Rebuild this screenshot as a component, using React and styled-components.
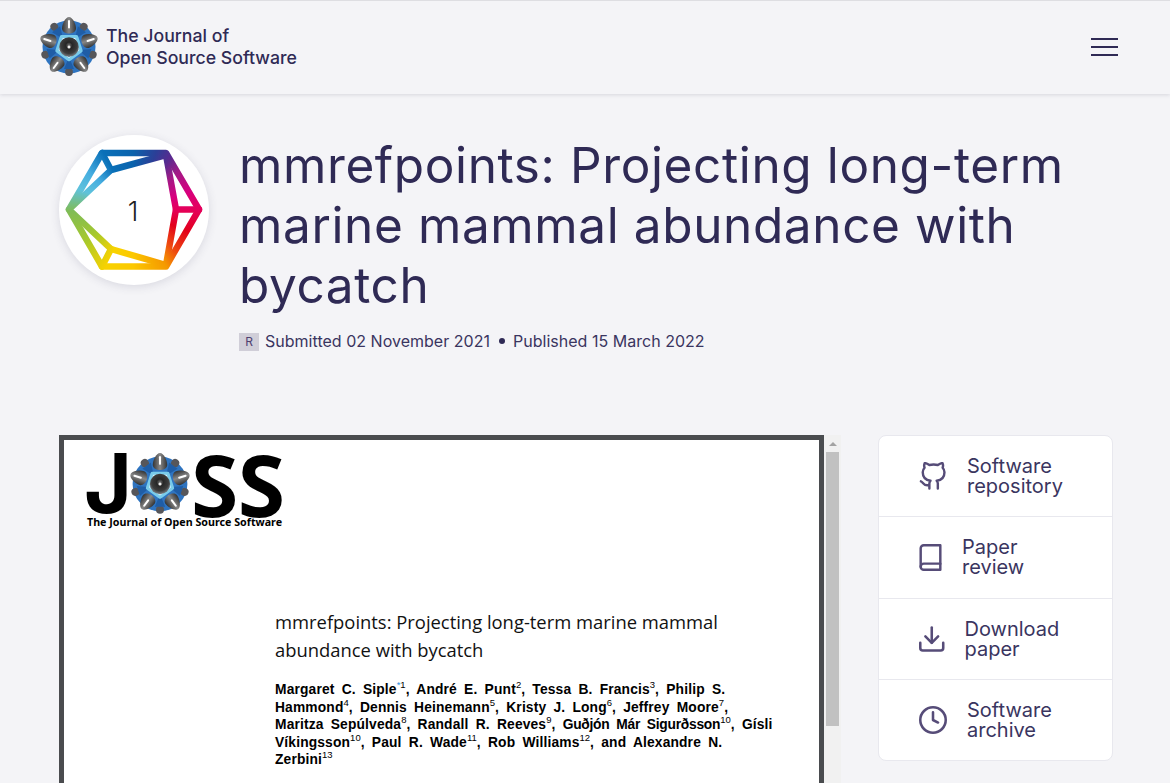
import React from "react";
import styled, { createGlobalStyle } from "styled-components";

const Global = createGlobalStyle`
  html, body { margin: 0; padding: 0; height: 100%; overflow: hidden; background: #f4f4f7; }
  body { font-family: Inter, "Liberation Sans", sans-serif; color: #2f2a55; }
  * { box-sizing: border-box; }
`;

const Header = styled.header`
  height: 94px; padding: 0 52px 1px 39px;
  display: flex; align-items: center; justify-content: space-between;
  border-top: 1px solid #dedee2;
  box-shadow: 0 1px 4px rgba(60, 60, 90, 0.16);
`;
const Brand = styled.a`display: flex; align-items: center; gap: 7px;`;
const BrandName = styled.div`font-size: 17.7px; font-weight: 500; line-height: 22px; color: #2f2a55; padding-bottom: 1px;`;
const Burger = styled.button`
  width: 27px; height: 18px; padding: 0; border: 0; background: none;
  display: flex; flex-direction: column; justify-content: space-between;
`;
const BurgerLine = styled.span`display: block; height: 2px; background: #2f2a55;`;

const Main = styled.main`padding: 41px 57px 0 59px;`;
const Hero = styled.section`display: flex; align-items: flex-start; gap: 30px; height: 300px;`;
const Badge = styled.div`
  width: 150px; height: 150px; flex: none; border-radius: 50%; background: #fff;
  box-shadow: 0 2px 10px rgba(60, 60, 90, 0.14);
  position: relative; display: flex; align-items: center; justify-content: center;
`;
const BadgeNumber = styled.span`
  font-size: 27px; color: #222; position: relative; top: 1px; left: -1px; font-weight: 300;
`;
const BadgeArt = styled.svg`position: absolute; inset: 0;`;
const Rainbow = styled.div`
  width: 150px; height: 150px;
  background: conic-gradient(from 0deg at 49.5% 49.5%,
    #0a62ac 0deg, #2b3f97 22deg, #5a2a8f 36deg, #a11a86 50deg, #d6007f 72deg,
    #e5005b 90deg, #e2001a 112deg, #ee4a10 135deg, #f59a00 150deg, #fcc800 180deg,
    #f8d200 205deg, #a9c92a 235deg, #80bc55 268deg, #5fc2dc 290deg, #45ade0 310deg,
    #0a70b8 332deg, #0a62ac 360deg);
`;
const HeroText = styled.div`flex: 1; min-width: 0;`;
const Title = styled.h1`
  margin: 0; font-size: 49.5px; line-height: 60px; font-weight: 400; color: #2f2a55; letter-spacing: 0.62px;
`;
const Meta = styled.div`
  margin-top: 15px; display: flex; align-items: center; gap: 6px;
  font-size: 16px; line-height: 20px; color: #3a3560; letter-spacing: 0.02px;
`;
const Avatar = styled.span`
  width: 20px; height: 18px; background: #d0ced8; color: #4f3f70;
  font-size: 12px; display: flex; align-items: center; justify-content: center; margin-top: 3px;
`;
const Dot = styled.span`
  width: 6px; height: 6px; border-radius: 50%; background: #2f2a55; margin: 0 2px 0 3px;
`;

const Columns = styled.section`display: grid; grid-template-columns: 782px 235px; column-gap: 37px;`;
const Viewer = styled.div`display: flex; height: 400px; overflow: hidden;`;
const Paper = styled.article`
  flex: 1; border: 5px solid #4a4c4f; background: #fff; color: #000; overflow: hidden;
  padding: 12px 0 0 23px;
`;
const Scrollbar = styled.div`
  width: 17px; flex: none; background: #f1f1f1; display: flex; flex-direction: column; align-items: center;
`;
const ScrollArrow = styled.span`
  width: 0; height: 0; margin: 7px 0 6px;
  border-left: 4px solid transparent; border-right: 4px solid transparent; border-bottom: 4px solid #a3a3a3;
`;
const ScrollThumb = styled.span`width: 13px; height: 274px; background: #c1c1c1;`;

const Masthead = styled.div`display: flex; align-items: center; height: 64px; line-height: 1; color: #000;`;
const MastLetter = styled.span`font-family: "Noto Sans", sans-serif; font-size: 86px; font-weight: 700; letter-spacing: -0.5px;`;
const MastJ = styled.span`font-family: Inter, sans-serif; font-size: 82px; font-weight: 700; margin: 0 -3px 0 -3px;`;
const Tagline = styled.div`
  font-family: "Noto Sans", sans-serif; font-size: 10.7px; font-weight: 700; line-height: 13px;
`;
const PaperBody = styled.div`margin-left: 188px; margin-top: 79px;`;
const PaperTitle = styled.h2`
  margin: 0; font-family: "Open Sans", sans-serif; font-weight: 400; font-size: 18.4px; line-height: 28px; color: #111;
  white-space: nowrap;
`;
const Authors = styled.p`
  margin: 17px 0 0; font-family: "Liberation Sans", sans-serif; font-weight: 700; font-size: 13.8px; line-height: 17.6px;
  white-space: nowrap; word-spacing: 3.2px; letter-spacing: 0.15px;
  sup { font-weight: 400; font-size: 9.5px; line-height: 0; letter-spacing: 0; }
  .star { color: #2d8fe0; }
`;
const TightName = styled.span`letter-spacing: -0.25px;`;

const Links = styled.nav`
  height: 326px; background: #fff; border: 1px solid #e8e8ee; border-radius: 8px;
  display: flex; flex-direction: column;
`;
const LinkRow = styled.a`
  flex: 1; display: flex; align-items: center; gap: 20px; padding-left: 40px;
  & + & { border-top: 1px solid #e8e8ee; }
`;
const LinkText = styled.span`font-size: 20px; line-height: 20px; color: #3a3560;`;
const LinkIcon = styled.svg`
  flex: none; fill: none; stroke: #564c78; stroke-width: 2; stroke-linecap: round; stroke-linejoin: round;
`;

const range = [0, 1, 2, 3, 4];
function Logo({ size }) {
  return (
    <svg width={size} height={size} viewBox="0 0 60 60" style={{ flex: "none" }}>
      <defs>
        <radialGradient id="coreGrad" cx="50%" cy="42%" r="55%">
          <stop offset="0" stopColor="#777" />
          <stop offset="0.3" stopColor="#262626" />
          <stop offset="0.75" stopColor="#3c3c3c" />
          <stop offset="1" stopColor="#6f7478" />
        </radialGradient>
        <linearGradient id="petalGrad" x1="0" x2="1" y1="0" y2="0">
          <stop offset="0" stopColor="#333" />
          <stop offset="0.5" stopColor="#888" />
          <stop offset="1" stopColor="#333" />
        </linearGradient>
      </defs>
      <circle cx="30" cy="30" r="26.5" fill="#2f74c0" />
      {range.map((i) => (
        <g key={i} transform={`rotate(${i * 72 + 36} 30 30)`}>
          <circle cx="30" cy="5" r="3.9" fill="#56565a" />
          <path d="M25 8 L30 20 L35 8 Z" fill="#1f5da6" />
        </g>
      ))}
      {range.map((i) => (
        <g key={i} transform={`rotate(${i * 72} 30 30)`}>
          <path d="M30 0 C33.5 0 37 7 37 11.5 C37 14.5 33.5 16.5 30 16.5 C26.5 16.5 23 14.5 23 11.5 C23 7 26.5 0 30 0 Z" fill="url(#petalGrad)" />
          <path d="M30 4 L30 10.5" stroke="#fff" strokeWidth="2" strokeLinecap="round" />
        </g>
      ))}
      <path d="M30 42.5 L18.1 33.9 L22.6 19.9 L37.4 19.9 L41.9 33.9 Z" fill="#3b8fd6" stroke="#79cbea" strokeWidth="3.6" strokeLinejoin="round" />
      <path d="M30 40.6 L20 33.2 L23.8 21.5 L36.2 21.5 L40 33.2 Z" fill="none" stroke="#d9f3fb" strokeWidth="1" strokeLinejoin="round" />
      <circle cx="30" cy="30" r="9.8" fill="url(#coreGrad)" />
      <circle cx="30" cy="30" r="1.5" fill="#eee" />
    </svg>
  );
}

const hexPath = "M43 18 H107 L140 74.5 L107 131.5 H43 L10 74.5 Z";
const innerPath = "M10 74.5 L52 35 L107 20 L117 74.5 L107 130 L52 114 Z";

function ColorBadge() {
  return (
    <BadgeArt width="150" height="150" viewBox="0 0 150 150">
      <mask id="rainbowMask">
        <g fill="none" stroke="#fff" strokeWidth="6.5" strokeLinejoin="round" strokeLinecap="round">
          <path d={hexPath} />
          <path d={innerPath} />
          <path d="M43 18 L52 35 M117 74.5 H140 M52 114 L43 131.5" />
        </g>
      </mask>
      <foreignObject x="0" y="0" width="150" height="150" mask="url(#rainbowMask)">
        <Rainbow />
      </foreignObject>
    </BadgeArt>
  );
}

const iconGithub = (
  <path d="M9 19c-5 1.5-5-2.5-7-3m14 6v-3.87a3.37 3.37 0 0 0-.94-2.61c3.14-.35 6.44-1.54 6.44-7A5.44 5.44 0 0 0 20 4.77 5.07 5.07 0 0 0 19.91 1S18.73.65 16 2.48a13.38 13.38 0 0 0-7 0C6.27.65 5.09 1 5.09 1A5.07 5.07 0 0 0 5 4.77a5.44 5.44 0 0 0-1.5 3.75c0 5.42 3.3 6.61 6.44 7A3.37 3.37 0 0 0 9 18.13V22" />
);
const iconBook = (
  <>
    <path d="M4 19.5A2.5 2.5 0 0 1 6.5 17H20" />
    <path d="M6.5 2H20v20H6.5A2.5 2.5 0 0 1 4 19.5v-15A2.5 2.5 0 0 1 6.5 2z" />
  </>
);
const iconDownload = (
  <>
    <path d="M21 15v4a2 2 0 0 1-2 2H5a2 2 0 0 1-2-2v-4" />
    <polyline points="7 10 12 15 17 10" />
    <line x1="12" y1="15" x2="12" y2="3" />
  </>
);
const iconClock = (
  <>
    <circle cx="12" cy="12" r="10" />
    <polyline points="12 6 12 12 16 14" />
  </>
);

const links = [
  { a: "Software", b: "repository", w: 28, h: 28, vb: "0.4 0 23.2 23.2", icon: iconGithub },
  { a: "Paper", b: "review", w: 23, h: 27, vb: "3 1 18 22", icon: iconBook },
  { a: "Download", b: "paper", w: 25.5, h: 26, vb: "2 2 20 20", icon: iconDownload },
  { a: "Software", b: "archive", w: 28, h: 28, vb: "1 1 22 22", icon: iconClock },
];

export default function App() {
  return (
    <>
      <Global />
      <Header>
        <Brand>
          <Logo size={60} />
          <BrandName>The Journal of<br />Open Source Software</BrandName>
        </Brand>
        <Burger aria-label="Menu">
          <BurgerLine /><BurgerLine /><BurgerLine />
        </Burger>
      </Header>
      <Main>
        <Hero>
          <Badge>
            <ColorBadge />
            <BadgeNumber>1</BadgeNumber>
          </Badge>
          <HeroText>
            <Title>mmrefpoints: Projecting long-term marine mammal abundance with bycatch</Title>
            <Meta>
              <Avatar>R</Avatar>
              <span>Submitted 02 November 2021</span>
              <Dot />
              <span>Published 15 March 2022</span>
            </Meta>
          </HeroText>
        </Hero>
        <Columns>
          <Viewer>
            <Paper>
              <Masthead>
                <MastJ>J</MastJ>
                <Logo size={62} />
                <MastLetter>SS</MastLetter>
              </Masthead>
              <Tagline>The Journal of Open Source Software</Tagline>
              <PaperBody>
                <PaperTitle>mmrefpoints: Projecting long-term marine mammal<br />abundance with bycatch</PaperTitle>
                <Authors>
                  Margaret C. Siple<sup className="star">*</sup><sup>1</sup>, André E. Punt<sup>2</sup>, Tessa B. Francis<sup>3</sup>, Philip S.<br />
                  Hammond<sup>4</sup>, Dennis Heinemann<sup>5</sup>, Kristy J. Long<sup>6</sup>, Jeffrey Moore<sup>7</sup>,<br />
                  Maritza Sepúlveda<sup>8</sup>, Randall R. Reeves<sup>9</sup>, <TightName>Guðjón Már Sigurðsson</TightName><sup>10</sup>, Gísli<br />
                  Víkingsson<sup>10</sup>, Paul R. Wade<sup>11</sup>, Rob Williams<sup>12</sup>, and Alexandre N.<br />
                  Zerbini<sup>13</sup>
                </Authors>
              </PaperBody>
            </Paper>
            <Scrollbar>
              <ScrollArrow />
              <ScrollThumb />
            </Scrollbar>
          </Viewer>
          <Links>
            {links.map((l) => (
              <LinkRow key={l.a + l.b}>
                <LinkIcon width={l.w} height={l.h} viewBox={l.vb}>{l.icon}</LinkIcon>
                <LinkText>{l.a}<br />{l.b}</LinkText>
              </LinkRow>
            ))}
          </Links>
        </Columns>
      </Main>
    </>
  );
}
